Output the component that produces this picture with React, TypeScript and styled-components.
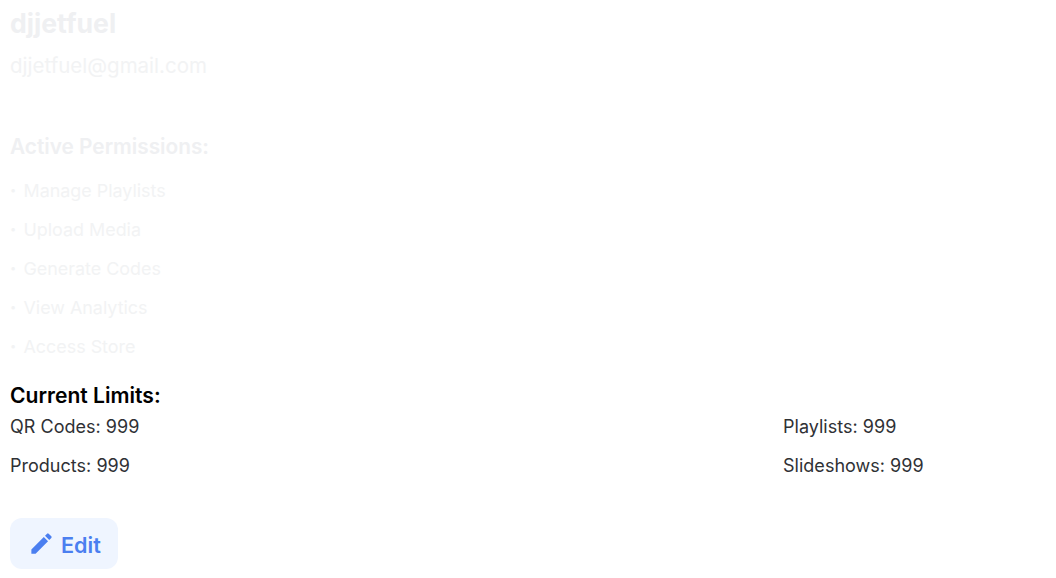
import React from 'react';
import styled, { createGlobalStyle } from 'styled-components';
import { MdEdit } from 'react-icons/md';

const GlobalStyle = createGlobalStyle`
    html, body {
        margin: 0;
        padding: 0;
        background: #fff;
        font-family: "Inter", "Liberation Sans", sans-serif;
    }
`;

const Page = styled.div`
    display: flex;
    flex-direction: column;
    align-items: flex-start;
    padding: 7px 10px 0;
`;

const Name = styled.div`
    font-size: 26.6px;
    line-height: 32px;
    font-weight: 700;
    color: #eff0f2;
`;

const Email = styled.div`
    margin-top: 11px;
    font-size: 20.5px;
    line-height: 32px;
    color: #f2f3f4;
`;

const PermissionsTitle = styled.div`
    margin-top: 49px;
    font-size: 20.8px;
    line-height: 32px;
    font-weight: 600;
    color: #eff0f2;
`;

const PermissionList = styled.ul`
    list-style: none;
    margin: 0;
    padding: 0;
    margin-top: 8px;
`;

const PermissionItem = styled.li`
    display: flex;
    font-size: 17.9px;
    line-height: 39px;
    color: #f2f3f4;

    &::before {
        content: "•";
        width: 13.5px;
        flex-shrink: 0;
        font-size: 11px;
    }
`;

const LimitsTitle = styled.div`
    margin-top: 16px;
    font-size: 21.1px;
    line-height: 28px;
    font-weight: 600;
    color: #000;
`;

const LimitsGrid = styled.div`
    display: grid;
    grid-template-columns: 773px 1fr;
    width: 100%;
    margin-top: -3px;
`;

const Limit = styled.div`
    font-size: 18px;
    line-height: 39px;
    letter-spacing: 0.02px;
    color: #2f3135;
`;

const EditButton = styled.button`
    display: flex;
    align-items: center;
    gap: 6px;
    width: 108px;
    height: 51px;
    margin-top: 33px;
    padding: 2px 0 0 18px;
    border: 0;
    border-radius: 12px;
    background: #eff5ff;
    color: #4b7ff0;
    font-family: inherit;
    font-size: 21.6px;
    font-weight: 600;
`;

const EditIcon = styled(MdEdit)`
    margin-top: -3px;
`;

const permissions = ['Manage Playlists', 'Upload Media', 'Generate Codes', 'View Analytics', 'Access Store'];
const limits = ['QR Codes: 999', 'Playlists: 999', 'Products: 999', 'Slideshows: 999'];

const App = () => {
    return (
        <Page>
            <GlobalStyle />
            <Name>djjetfuel</Name>
            <Email>djjetfuel@gmail.com</Email>
            <PermissionsTitle>Active Permissions:</PermissionsTitle>
            <PermissionList>
                {permissions.map(item => <PermissionItem key={item}>{item}</PermissionItem>)}
            </PermissionList>
            <LimitsTitle>Current Limits:</LimitsTitle>
            <LimitsGrid>
                {limits.map(item => <Limit key={item}>{item}</Limit>)}
            </LimitsGrid>
            <EditButton>
                <EditIcon size={27} />
                Edit
            </EditButton>
        </Page>
    );
};

export default App;
